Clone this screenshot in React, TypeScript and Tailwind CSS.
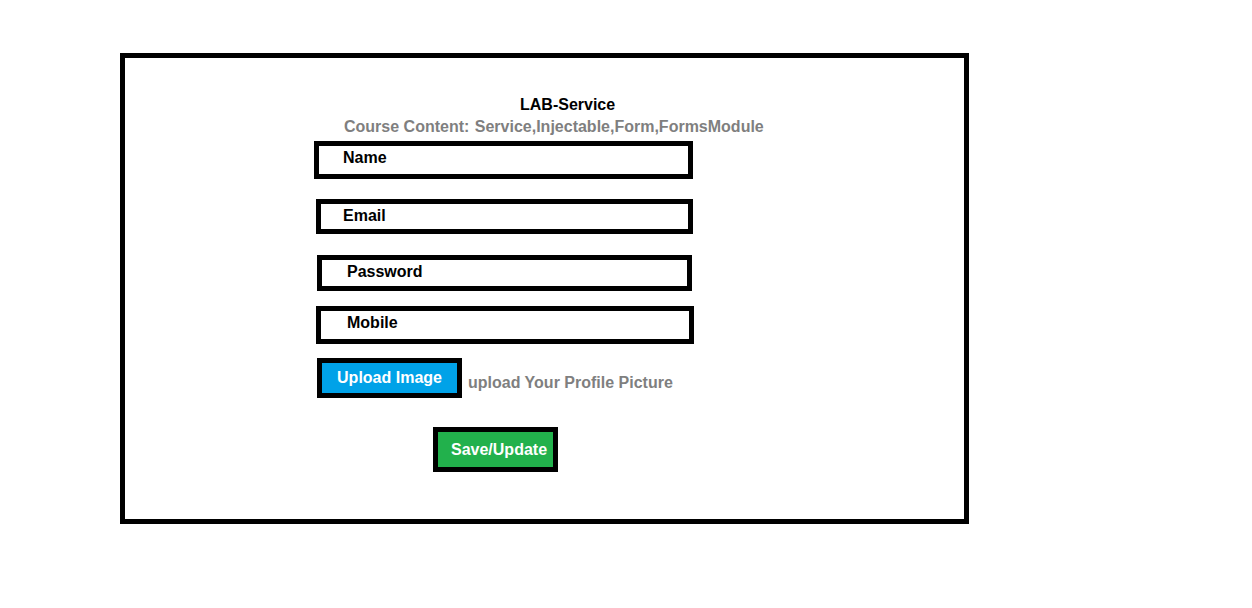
const fields = [
  { label: "Name", box: "mt-[4px] ml-[189px] w-[379px] h-[38px]", text: "pl-[24px]" },
  { label: "Email", box: "mt-[20px] ml-[191px] w-[377px] h-[35px]", text: "pl-[22px]" },
  { label: "Password", box: "mt-[21px] ml-[192px] w-[375px] h-[36px]", text: "pl-[25px]" },
  { label: "Mobile", box: "mt-[15px] ml-[191px] w-[378px] h-[38px]", text: "pl-[26px]" },
];

const App = () => {
  return (
    <div className="w-[1252px] h-[608px] bg-white pt-[53px] pl-[120px] font-['Liberation_Sans',Arial,sans-serif] font-bold text-[16px] leading-[20px]">
      <div className="w-[849px] h-[471px] border-[5px] border-black flex flex-col items-start">
        {/* Heading */}
        <h1 className="mt-[37px] ml-[395px] text-black">LAB-Service</h1>
        <p className="mt-[2px] ml-[219px] text-[#7f7f7f] whitespace-nowrap">
          Course Content: <span className="ml-[1px]">Service,Injectable,Form,FormsModule</span>
        </p>

        {/* Form fields */}
        {fields.map((f) => (
          <div key={f.label} className={`${f.box} border-[5px] border-black pt-[2px]`}>
            <span className={`block ${f.text} text-black`}>{f.label}</span>
          </div>
        ))}

        {/* Upload row */}
        <div className="mt-[14px] ml-[192px] flex items-start">
          <div className="w-[145px] h-[40px] border-[5px] border-black bg-[#00a2e8] flex items-center justify-center text-white">
            Upload Image
          </div>
          <span className="ml-[6px] mt-[15px] text-[#7f7f7f] whitespace-nowrap">upload Your Profile Picture</span>
        </div>

        {/* Save button */}
        <div className="mt-[29px] ml-[308px] w-[125px] h-[45px] border-[5px] border-black bg-[#22b14c] flex items-center pl-[13px] text-white">
          Save/Update
        </div>
      </div>
    </div>
  );
};

export default App;
